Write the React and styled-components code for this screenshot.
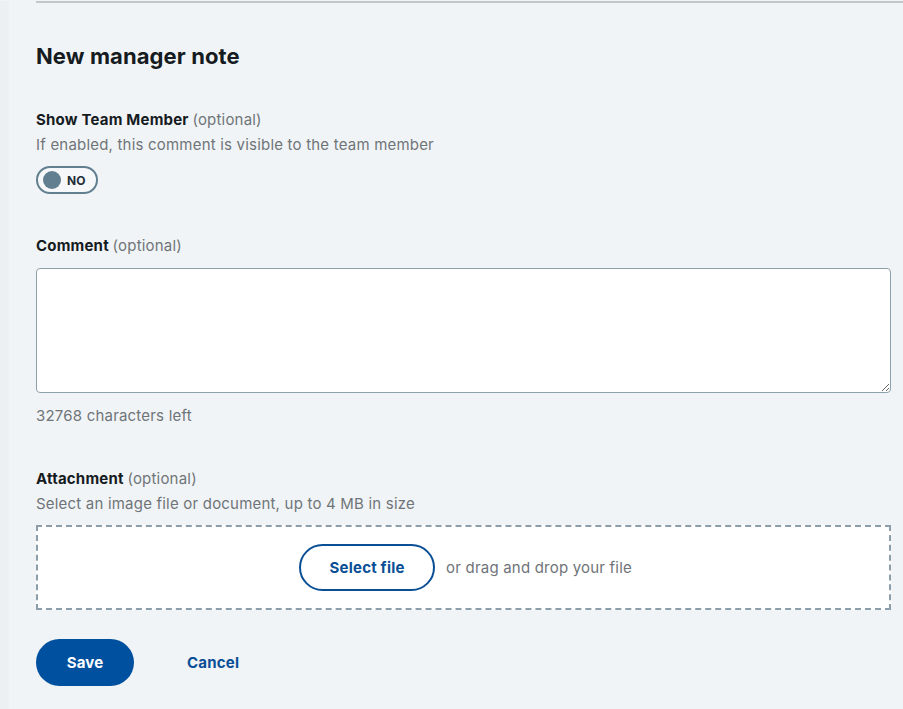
import React from "react";
import styled, { createGlobalStyle } from "styled-components";

const Global = createGlobalStyle`
  html, body { margin: 0; padding: 0; background: #f1f4f6; }
  body { font-family: Inter, "Noto Sans", "Liberation Sans", sans-serif; letter-spacing: 0.2px; }
  * { box-sizing: border-box; }
`;

const Page = styled.div`
  min-height: 709px;
  border-left: 9px solid #ecf0f2;
  padding: 0 12px 0 27px;
`;

const TopRule = styled.div`
  height: 2px;
  margin-top: 1px;
  background: #c3c7ca;
  margin-right: -12px;
`;

const Title = styled.h1`
  margin: 37px 0 0;
  font-size: 22px;
  font-weight: 700;
  color: #151b1f;
  line-height: 32px;
  letter-spacing: 0.1px;
`;

const Field = styled.div`
  margin-top: ${(p) => p.$top}px;
  display: flex;
  flex-direction: column;
`;

const Label = styled.div`
  font-size: 15px;
  font-weight: 700;
  color: #151b1f;
  line-height: 22px;
`;

const Optional = styled.span`
  font-weight: 400;
  color: #6f7479;
`;

const Hint = styled.div`
  font-size: 15px;
  color: #6f7479;
  line-height: 22px;
  margin-top: ${(p) => p.$top || 0}px;
`;

const Toggle = styled.button`
  margin-top: 10px;
  width: 62px;
  height: 28px;
  border: 2px solid #627f90;
  border-radius: 14px;
  background: #f5f7f8;
  display: flex;
  align-items: center;
  padding: 0 0 0 5px;
  gap: 6px;
  cursor: pointer;
  font-family: inherit;
`;

const Knob = styled.span`
  width: 18px;
  height: 18px;
  border-radius: 50%;
  background: #617f91;
`;

const ToggleText = styled.span`
  font-size: 12px;
  font-weight: 700;
  color: #1f2e38;
`;

const TextArea = styled.textarea`
  margin-top: 11px;
  width: 100%;
  height: 125px;
  border: 1px solid #8da1ac;
  border-radius: 4px;
  background: #fff;
  resize: vertical;
  font-family: inherit;
  font-size: 15px;
  padding: 8px;
  outline: none;
`;

const DropZone = styled.div`
  margin-top: 10px;
  height: 85px;
  border: 2px dashed #8c9ea9;
  background: #fff;
  display: flex;
  align-items: center;
  justify-content: center;
  gap: 11px;
  padding-left: 4px;
`;

const OutlineButton = styled.button`
  height: 47px;
  width: 136px;
  border: 2px solid #0a4f96;
  border-radius: 24px;
  background: #fff;
  color: #0a4f96;
  font-family: inherit;
  font-size: 15px;
  font-weight: 700;
  letter-spacing: 0.2px;
  cursor: pointer;
`;

const DropText = styled.span`
  font-size: 15px;
  color: #6f7479;
`;

const Actions = styled.div`
  margin-top: 29px;
  display: flex;
  align-items: center;
  gap: 37px;
`;

const PrimaryButton = styled.button`
  height: 47px;
  width: 98px;
  border: none;
  border-radius: 24px;
  background: #0050a0;
  color: #fff;
  font-family: inherit;
  font-size: 15px;
  font-weight: 700;
  letter-spacing: 0.2px;
  cursor: pointer;
`;

const LinkButton = styled.button`
  border: none;
  background: none;
  padding: 0 16px;
  height: 47px;
  color: #0a4f96;
  font-family: inherit;
  font-size: 15px;
  font-weight: 700;
  letter-spacing: 0.2px;
  cursor: pointer;
`;

export default function App() {
  return (
    <>
      <Global />
      <Page>
        <TopRule />
        <Title>New manager note</Title>

        <Field $top={37}>
          <Label>
            Show Team Member <Optional>(optional)</Optional>
          </Label>
          <Hint $top={3}>If enabled, this comment is visible to the team member</Hint>
          <div>
            <Toggle type="button">
              <Knob />
              <ToggleText>NO</ToggleText>
            </Toggle>
          </div>
        </Field>

        <Field $top={41}>
          <Label>
            Comment <Optional>(optional)</Optional>
          </Label>
          <TextArea />
          <Hint $top={12}>32768 characters left</Hint>
        </Field>

        <Field $top={41}>
          <Label>
            Attachment <Optional>(optional)</Optional>
          </Label>
          <Hint $top={3}>Select an image file or document, up to 4 MB in size</Hint>
          <DropZone>
            <OutlineButton type="button">Select file</OutlineButton>
            <DropText>or drag and drop your file</DropText>
          </DropZone>
        </Field>

        <Actions>
          <PrimaryButton type="button">Save</PrimaryButton>
          <LinkButton type="button">Cancel</LinkButton>
        </Actions>
      </Page>
    </>
  );
}
